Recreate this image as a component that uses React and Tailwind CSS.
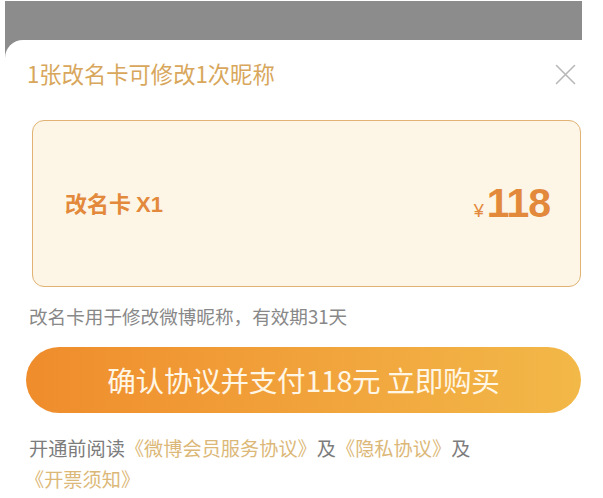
export default function App() {
  const cjk = { fontFamily: '"Noto Sans CJK SC", "Noto Sans", sans-serif' };
  return (
    <div className="w-[603px] h-[498px] bg-white overflow-hidden" style={cjk}>
      <div className="ml-[5px] mt-[1px] w-[577px] h-[497px] bg-[#8c8c8c] pt-[39px]">
        <div className="h-full bg-white rounded-tl-[18px] flex flex-col">
          <div className="flex items-center justify-between h-[30px] mt-[18px] pl-[22px] pr-[6px]">
            <span className="text-[22.3px] leading-[30px] text-[#d8a75c]">1张改名卡可修改1次昵称</span>
            <svg width="21" height="21" viewBox="0 0 21 21" className="mt-[3px]">
              <path d="M1.5 1.5 L19.5 19.5 M19.5 1.5 L1.5 19.5" stroke="#b8b8b8" strokeWidth="1.6" strokeLinecap="round" />
            </svg>
          </div>
          <div className="ml-[27px] mt-[32px] w-[549px] h-[167px] rounded-[12px] border-[1.5px] border-[#e0b273] bg-[#fdf5e6] flex items-center justify-between pl-[32px] pr-[30px]">
            <span className="text-[22px] font-semibold text-[#e3893b]">
              改名卡 <span style={{ fontFamily: '"Liberation Sans", Arial, sans-serif' }} className="font-bold">X1</span>
            </span>
            <span className="flex items-baseline text-[#e3893b]" style={{ fontFamily: '"Liberation Sans", Arial, sans-serif' }}>
              <span className="text-[18px] mr-[3px]">¥</span>
              <span className="text-[41px] font-bold leading-none tracking-[-1px]">118</span>
            </span>
          </div>
          <div className="ml-[24px] mt-[16px] text-[18.6px] leading-[26px] text-[#888888]">改名卡用于修改微博昵称，有效期31天</div>
          <div className="ml-[21px] mt-[18px] w-[555px] h-[66px] rounded-full bg-gradient-to-r from-[#ef8c2c] to-[#f2b848] flex items-center justify-center">
            <span className="text-[28.6px] text-[#fff6e6] tracking-[-0.3px]">确认协议并支付118元 立即购买</span>
          </div>
          <div className="ml-[24px] mt-[20px] text-[19.2px] leading-[31px] text-[#7c7c7c] w-[500px]">
            <div>
              开通前阅读<span className="text-[#dcb878]">《微博会员服务协议》</span>及<span className="text-[#dcb878]">《隐私协议》</span>及
            </div>
            <div className="-ml-[4px] text-[#dcb878]">《开票须知》</div>
          </div>
        </div>
      </div>
    </div>
  );
}
